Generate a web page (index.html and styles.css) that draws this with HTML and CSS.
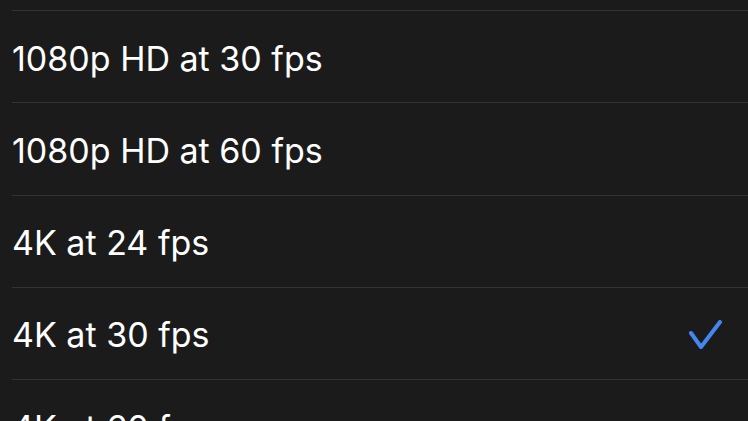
FILE: index.html
```html
<!DOCTYPE html>
<html lang="en">

<head>
    <meta charset="UTF-8">
    <meta name="viewport" content="width=device-width, initial-scale=1.0">
    <title>Record Video</title>
    <link rel="stylesheet" href="styles.css">
</head>

<body>
    <ul class="options">
        <li class="option">1080p HD at 30 fps</li>
        <li class="option">1080p HD at 60 fps</li>
        <li class="option">4K at 24 fps</li>
        <li class="option selected">
            <span>4K at 30 fps</span>
            <svg class="check" width="36" height="30" viewBox="0 0 36 30">
                <path d="M4 13 L14 27 L33 2" fill="none" stroke="#4287f0" stroke-width="4" stroke-linecap="round" stroke-linejoin="round"/>
            </svg>
        </li>
        <li class="option">4K at 60 fps</li>
    </ul>
</body>

</html>
```

FILE: styles.css
```css
* {
    box-sizing: border-box;
    margin: 0;
    padding: 0;
}

body {
    font-family: Inter, "Noto Sans", sans-serif;
    background: #1b1b1c;
    color: #fff;
    height: 100vh;
    overflow: hidden;
}

.options {
    list-style: none;
    padding-top: 10px;
}

.option {
    display: flex;
    align-items: center;
    justify-content: space-between;
    height: 92.25px;
    margin-left: 12px;
    padding-top: 3px;
    padding-right: 25px;
    border-top: 1px solid #333335;
    font-size: 34px;
}

.check {
    display: block;
    margin-top: 1px;
}
```
